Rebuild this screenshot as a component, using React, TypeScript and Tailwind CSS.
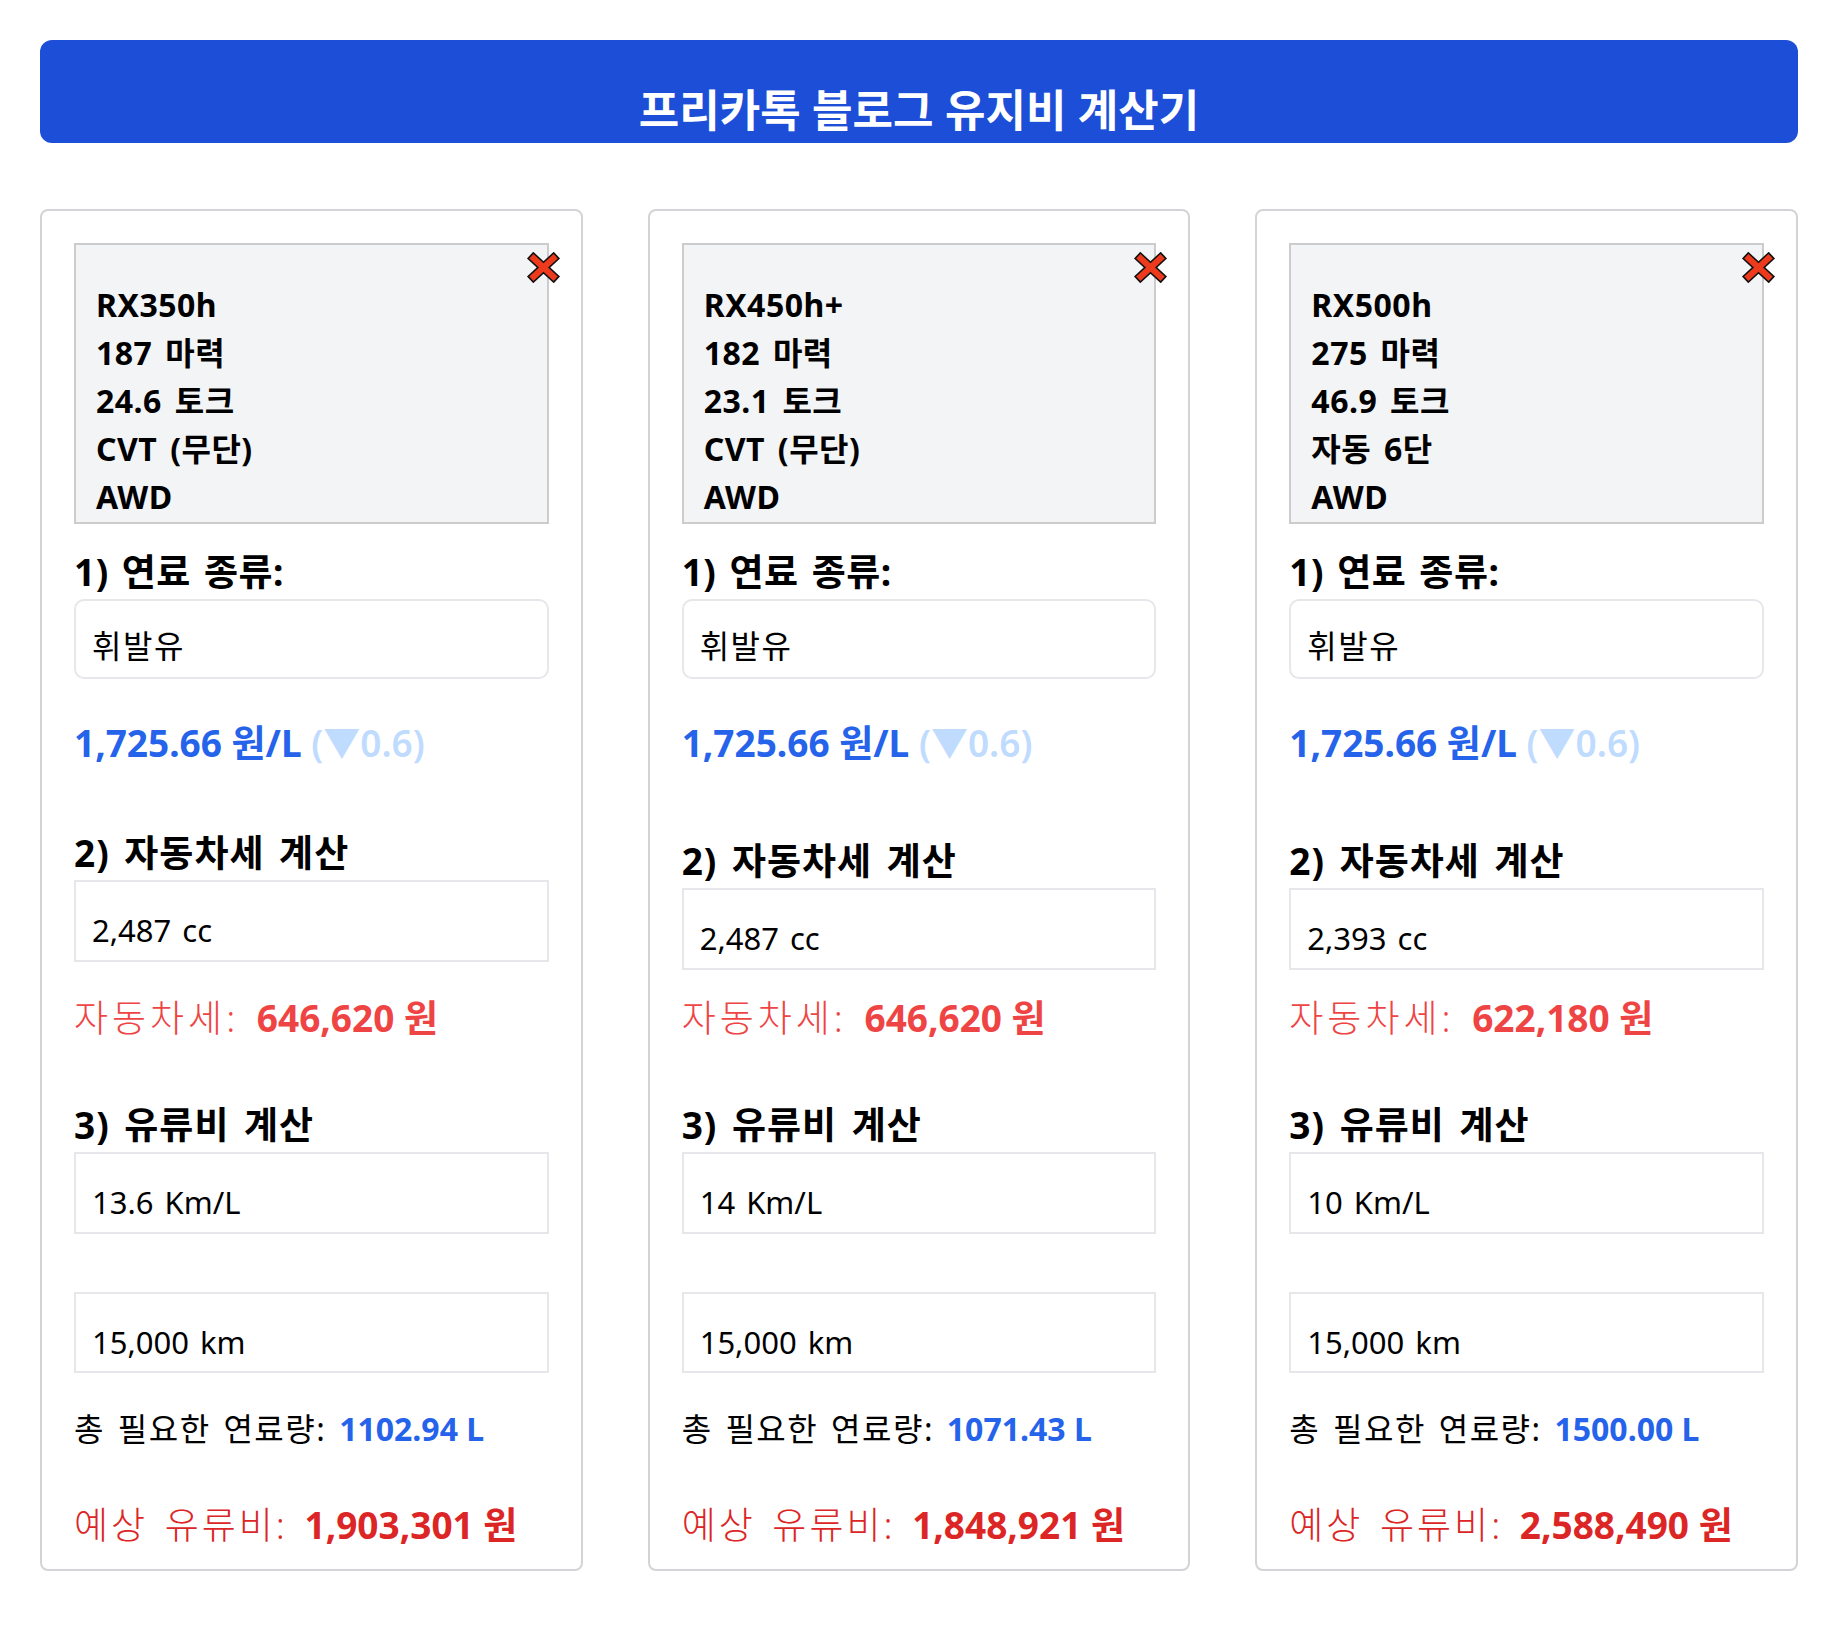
import React from 'react';

type Car = {
  name: string;
  hp: string;
  torque: string;
  gear: string;
  drive: string;
  cc: string;
  tax: string;
  eff: string;
  fuel: string;
  cost: string;
  first?: boolean;
};

const cars: Car[] = [
  { name: 'RX350h', hp: '187 마력', torque: '24.6 토크', gear: 'CVT (무단)', drive: 'AWD', cc: '2,487 cc', tax: '646,620 원', eff: '13.6 Km/L', fuel: '1102.94 L', cost: '1,903,301 원', first: true },
  { name: 'RX450h+', hp: '182 마력', torque: '23.1 토크', gear: 'CVT (무단)', drive: 'AWD', cc: '2,487 cc', tax: '646,620 원', eff: '14 Km/L', fuel: '1071.43 L', cost: '1,848,921 원' },
  { name: 'RX500h', hp: '275 마력', torque: '46.9 토크', gear: '자동 6단', drive: 'AWD', cc: '2,393 cc', tax: '622,180 원', eff: '10 Km/L', fuel: '1500.00 L', cost: '2,588,490 원' },
];

function CloseIcon() {
  return (
    <svg viewBox="0 0 34 30" className="w-[35px] h-[31px]">
      <path d="M4 3 L30 27 M30 3 L4 27" stroke="#111" strokeWidth="9" strokeLinecap="butt" />
      <path d="M5.2 4.1 L28.8 25.9 M28.8 4.1 L5.2 25.9" stroke="#ee3a1c" strokeWidth="6" strokeLinecap="butt" />
    </svg>
  );
}

function CarCard({ car }: { car: Car }) {
  return (
    <div className="border-2 border-[#d4d4d8] rounded-lg bg-white px-8 pt-8 pb-[20px]">
      {/* spec box */}
      <div className="relative border-2 border-[#cccccc] bg-[#f3f4f6] pt-[36px] pb-[1px] pl-[20px] text-[32px] leading-[48px] font-bold text-black tracking-[0.5px] [word-spacing:4px]">
        <button className="absolute top-[7px] right-[-14px]">
          <CloseIcon />
        </button>
        <div>{car.name}</div>
        <div>{car.hp}</div>
        <div>{car.torque}</div>
        <div>{car.gear}</div>
        <div>{car.drive}</div>
      </div>

      <h2 className="mt-[26px] text-[37px] leading-[44px] font-bold text-black tracking-[0.5px] [word-spacing:3px]">1) 연료 종류:</h2>
      <div className="mt-[5px] h-[80px] border-2 border-[#e5e7eb] rounded-[10px] flex items-center pl-[16px] pt-[14px] text-[32px] leading-[40px] text-black tracking-[1.5px]">
        휘발유
      </div>

      <div className="mt-[40px] text-[37px] leading-[48px] font-bold text-[#2563eb]">
        1,725.66 원/L <span className="text-[#bfdbfe] font-semibold">(▼0.6)</span>
      </div>

      <h2 className={`${car.first ? 'mt-[64px]' : 'mt-[72px]'} text-[37px] leading-[44px] font-bold text-black tracking-[1px] [word-spacing:4px]`}>2) 자동차세 계산</h2>
      <div className="mt-[5px] h-[82px] border-2 border-[#e5e7eb] flex items-center pl-[16px] pt-[18px] text-[31px] leading-[40px] text-black [word-spacing:3px]">
        {car.cc}
      </div>

      <div className={`${car.first ? 'mt-[32px]' : 'mt-[24px]'} text-[37px] leading-[48px] text-[#ef4444]`}>
        <span className="font-light tracking-[4px] [word-spacing:4px]">자동차세: </span>
        <span className="font-bold">{car.tax}</span>
      </div>

      <h2 className="mt-[61px] text-[37px] leading-[44px] font-bold text-black tracking-[1px] [word-spacing:4px]">3) 유류비 계산</h2>
      <div className="mt-[5px] h-[82px] border-2 border-[#e5e7eb] flex items-center pl-[16px] pt-[18px] text-[31px] leading-[40px] text-black [word-spacing:3px]">
        {car.eff}
      </div>
      <div className="mt-[58px] h-[81px] border-2 border-[#e5e7eb] flex items-center pl-[16px] pt-[18px] text-[31px] leading-[40px] text-black [word-spacing:3px]">
        15,000 km
      </div>

      <div className="mt-[34px] text-[32px] leading-[44px] text-black">
        <span className="tracking-[1.5px] [word-spacing:3px]">총 필요한 연료량: </span>
        <span className="font-bold text-[#2563eb]">{car.fuel}</span>
      </div>

      <div className="mt-[50px] text-[37px] leading-[48px] text-[#dc2626]">
        <span className="font-light tracking-[3px] [word-spacing:4px]">예상 유류비: </span>
        <span className="font-bold">{car.cost}</span>
      </div>
    </div>
  );
}

export default function App() {
  return (
    <div
      className="min-h-screen bg-white px-10 pt-10 pb-16"
      style={{ fontFamily: '"Noto Sans", "Noto Sans CJK KR", sans-serif' }}
    >
      <header className="h-[103px] rounded-xl bg-[#1d4ed8] flex items-end justify-center pb-[7px]">
        <h1 className="text-[44px] leading-[52px] font-bold text-white">프리카톡 블로그 유지비 계산기</h1>
      </header>

      <div className="mt-[66px] grid grid-cols-3 gap-[65px]">
        {cars.map((car) => (
          <CarCard key={car.name} car={car} />
        ))}
      </div>
    </div>
  );
}
